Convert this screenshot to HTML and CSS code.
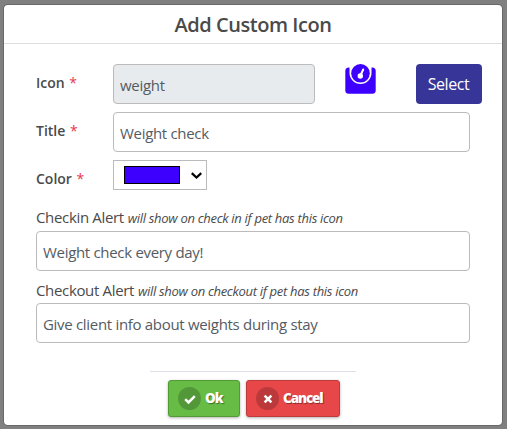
FILE: index.html
```html
<!DOCTYPE html>
<html lang="en">
<head>
    <meta charset="UTF-8">
    <meta name="viewport" content="width=device-width, initial-scale=1.0">
    <title>Add Custom Icon</title>
    <link rel="stylesheet" href="styles.css">
</head>
<body>
    <div class="modal">
        <h1 class="modal-title">Add Custom Icon</h1>
        <form class="modal-form">
            <div class="row">
                <label for="icon" class="row-label">Icon <span class="required">*</span></label>
                <input type="text" id="icon" class="field field-icon" value="weight" readonly>
                <svg class="weight-icon" viewBox="0 0 31 30">
                    <rect x="0.300" y="3.500" width="30.400" height="26.300" rx="3.500" fill="#3d00ff"/>
                    <path d="M4.500 0h22v9a11 11 0 0 1-22 0z" fill="#fff"/>
                    <circle cx="15.500" cy="9.300" r="9.300" fill="#3d00ff"/>
                    <path d="M15.500 11.500l2.700-6" fill="none" stroke="#fff" stroke-width="2" stroke-linecap="round"/>
                    <circle cx="15.300" cy="12" r="2.700" fill="#fff"/>
                </svg>
                <button type="button" class="btn-select">Select</button>
            </div>
            <div class="row">
                <label for="title" class="row-label">Title <span class="required">*</span></label>
                <input type="text" id="title" class="field" value="Weight check">
            </div>
            <div class="row">
                <label class="row-label label-color">Color <span class="required">*</span></label>
                <div class="color-select">
                    <span class="swatch"></span>
                    <svg class="chevron" viewBox="0 0 10 6">
                        <path d="M.7 .8l4.300 4 4.300-4" fill="none" stroke="#000" stroke-width="2"/>
                    </svg>
                </div>
            </div>

            <label for="checkin" class="alert-label label-checkin"><span>Checkin Alert</span> <em>will show on check in if pet has this icon</em></label>
            <input type="text" id="checkin" class="field field-alert" value="Weight check every day!">

            <label for="checkout" class="alert-label"><span>Checkout Alert</span> <em>will show on checkout if pet has this icon</em></label>
            <input type="text" id="checkout" class="field field-alert" value="Give client info about weights during stay">
        </form>

        <div class="modal-footer">
            <button type="button" class="btn btn-ok">
                <span class="btn-badge">
                    <svg viewBox="0 0 12 12"><path d="M1.200 6.200l3.300 3.200 6.300-6.300" fill="none" stroke="#fff" stroke-width="2.500"/></svg>
                </span>
                Ok
            </button>
            <button type="button" class="btn btn-cancel">
                <span class="btn-badge">
                    <svg viewBox="0 0 12 12"><path d="M2.600 2.600l6.800 6.800M9.400 2.600l-6.800 6.800" fill="none" stroke="#fff" stroke-width="2.500"/></svg>
                </span>
                Cancel
            </button>
        </div>
    </div>
</body>
</html>
```

FILE: styles.css
```css
* {
    box-sizing: border-box;
}

body {
    margin: 0;
    padding: 5px 5px 4px 4px;
    height: 429px;
    overflow: hidden;
    background-color: #808080;
    font-family: "Open Sans", "Noto Sans", sans-serif;
    font-size: 15px;
    color: #4a4a4a;
}

.modal {
    height: 420px;
    background-color: #fff;
    border-radius: 4px;
    box-shadow: 0 0 0 1px #686868;
}

.modal-title {
    height: 39px;
    margin: 0;
    border-bottom: 1px solid #dedede;
    font-size: 20px;
    font-weight: 600;
    line-height: 40px;
    text-align: center;
    letter-spacing: -0.45px;
}

.modal-form {
    padding: 20px 32px 0;
}

.row {
    display: flex;
    margin-bottom: 8px;
}

.row-label {
    width: 77px;
    height: 38px;
    flex: none;
    font-size: 14px;
    font-weight: 600;
    line-height: 37px;
}

.label-color {
    height: 30px;
}

.required {
    margin-left: 1px;
    color: #e8384f;
    font-weight: 400;
}

.field {
    width: 357px;
    height: 40px;
    padding: 1px 6px 0;
    border: 1px solid #bbb;
    border-radius: 4px;
    background-color: #fff;
    color: #555b62;
    font-family: inherit;
    font-size: 15px;
    letter-spacing: -0.31px;
}

.field-icon {
    width: 202px;
    background-color: #e7ebee;
}

.weight-icon {
    width: 31px;
    height: 30px;
    margin: 0 40px 0 30px;
    flex: none;
}

.btn-select {
    width: 66px;
    height: 40px;
    padding: 0 1px 0 0;
    flex: none;
    border: none;
    border-radius: 4px;
    background-color: #383599;
    color: #fff;
    font-family: inherit;
    font-size: 16px;
    letter-spacing: -0.4px;
}

.color-select {
    display: flex;
    align-items: center;
    justify-content: space-between;
    width: 94px;
    height: 30px;
    padding: 0 4px 0 10px;
    border: 1px solid #bbb;
}

.swatch {
    width: 56px;
    height: 18px;
    border: 1px solid #000;
    background-color: #3d00ff;
}

.chevron {
    width: 11px;
    height: 7px;
}

.alert-label {
    display: flex;
    align-items: baseline;
    gap: 4px;
    height: 32px;
    padding-top: 9px;
    font-size: 15px;
    line-height: 20px;
    letter-spacing: -0.34px;
    white-space: nowrap;
}

.label-checkin {
    height: 33px;
}

.alert-label em {
    font-size: 13px;
    letter-spacing: -0.3px;
}

.field-alert {
    display: block;
    width: 434px;
}

.modal-footer {
    display: flex;
    justify-content: center;
    gap: 6px;
    width: 206px;
    margin: 28px auto 0 146px;
    padding: 8px 0 0 2px;
    border-top: 1px solid #dde0e6;
}

.btn {
    display: flex;
    align-items: center;
    gap: 4px;
    height: 37px;
    padding: 0 0 2px 9px;
    border-radius: 3px;
    color: #fff;
    font-family: inherit;
    font-size: 13.5px;
    font-weight: 800;
    letter-spacing: -1.1px;
    text-shadow: 1px 1px 1px rgba(0, 0, 0, 0.4);
    box-shadow: 0 1px 3px rgba(0, 0, 0, 0.3);
}

.btn-ok {
    width: 72px;
    border: 1px solid #539a35;
    background-color: #67bc45;
}

.btn-cancel {
    width: 94px;
    border: 1px solid #bd3a3e;
    background-color: #e84749;
}

.btn-badge {
    display: flex;
    align-items: center;
    justify-content: center;
    width: 23px;
    height: 23px;
    margin-top: 2px;
    border-radius: 50%;
    background-color: rgba(0, 0, 0, 0.19);
}

.btn-badge svg {
    width: 12px;
    height: 12px;
}
```
